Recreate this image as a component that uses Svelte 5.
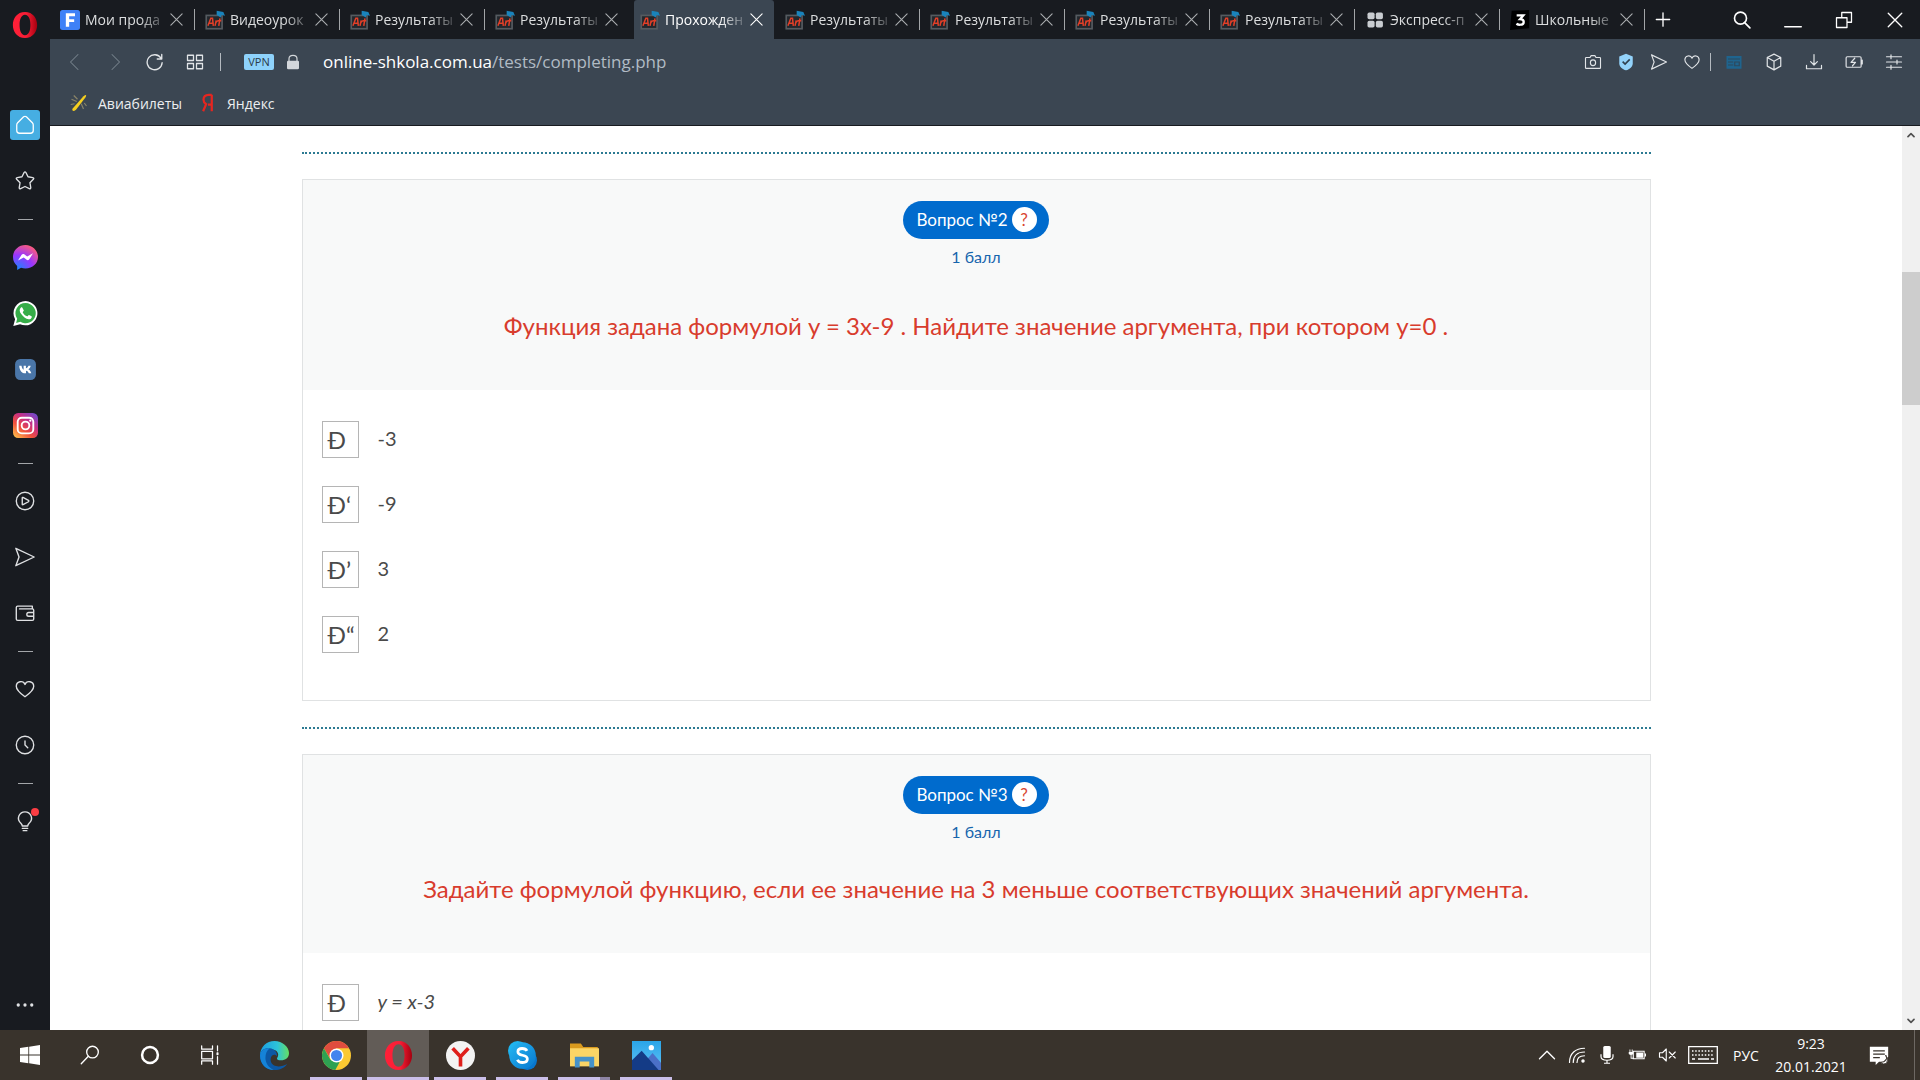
<script>
  const stroke = (body, w = 1.5, box = 24) =>
    `<svg viewBox="0 0 ${box} ${box}" width="100%" height="100%" fill="none" stroke="currentColor" stroke-width="${w}" stroke-linecap="round" stroke-linejoin="round">${body}</svg>`;
  const solid = (body, box = 24) =>
    `<svg viewBox="0 0 ${box} ${box}" width="100%" height="100%">${body}</svg>`;

  const icons = {
    opera: solid('<defs><linearGradient id="op" x1="0" x2="1"><stop offset="0" stop-color="#ff2038"/><stop offset=".55" stop-color="#fa1e36"/><stop offset="1" stop-color="#a5000f"/></linearGradient></defs><path fill="url(#op)" fill-rule="evenodd" d="M12 0C4.600 0 .8 6 .8 12s3.800 12 11.200 12 11.200-6 11.200-12S19.400 0 12 0Zm0 2.600c3.700 0 5 4.800 5 9.400s-1.300 9.400-5 9.400S7 16.600 7 12s1.300-9.400 5-9.400Z"/>'),
    home: stroke('<path d="M4 9.500 10.500 3q1.500-1 3 0L20 9.500q1 1 1 2.500v6q0 3-3 3H6q-3 0-3-3v-6q0-1.500 1-2.500Z"/>', 1.4),
    star: stroke('<path d="M11 2.800q1-1.500 2 0l2.300 4.600 5.200.9q1.700.5.600 1.900l-3.700 3.700.9 5.300q0 1.700-1.600 1.100L12 18l-4.700 2.300q-1.700.6-1.600-1.100l.9-5.300-3.700-3.700q-1.100-1.400.6-1.900l5.200-.9Z"/>'),
    messenger: solid('<defs><radialGradient id="ms" cx=".2" cy="1" r="1.100"><stop offset="0" stop-color="#1588ff"/><stop offset=".55" stop-color="#9a35ff"/><stop offset="1" stop-color="#ff5d78"/></radialGradient></defs><path fill="url(#ms)" d="M12 0C5.200 0 0 5 0 11.600c0 3.500 1.400 6.500 4 8.500v3.900l3.700-2.100c1.300.4 2.700.6 4.300.6 6.800 0 12-4.700 12-10.900S18.800 0 12 0Z"/><path fill="#fff" d="m4.800 15 3.500-5.600c.6-.9 1.700-1.100 2.500-.5l2.800 2.100 5.600-3-3.600 5.700c-.6.900-1.700 1.100-2.500.5L10.300 12Z"/>'),
    whatsapp: solid('<path fill="#fff" d="M12.200 0A11.700 11.700 0 0 0 2 17.500L.3 24l6.500-1.700A11.700 11.700 0 1 0 12.200 0Z"/><path fill="#36ad48" d="M12.200 2a9.700 9.700 0 0 0-8.200 15l-1 4 4.100-1A9.700 9.700 0 1 0 12.200 2Z"/><path fill="#fff" d="M9 6.500c-.4-.7-1-.6-1.500-.1-1.600 1.600-1.300 3.700.2 5.900 2 3 4.600 4.900 7.300 5.200 1.500.1 3-.9 3.100-2.500 0-.5-2.500-1.700-2.900-1.600-.6.200-.9 1.500-1.600 1.300-1.700-.5-3.300-1.900-4.200-3.700-.2-.6.900-1.100 1-1.800Z"/>'),
    vk: solid('<rect x="2" y="2" width="20" height="20" rx="5" fill="#4a76a8"/><path fill="#fff" d="M5 8h2.200c.2 2.200 1.300 3.600 2 3.900V8h2.200v2.600c1-.2 2-1.400 2.400-2.600H16c-.3 1.600-1.400 2.900-2.300 3.500 1 .5 2.200 1.600 2.900 3.900h-2.400c-.4-1.300-1.400-2.300-2.700-2.500v2.500h-.6C7.500 15.400 5.200 12.600 5 8Z" transform="translate(1 .3)"/>'),
    instagram: solid('<defs><linearGradient id="ig" x1=".1" y1="1" x2=".9" y2="0"><stop offset="0" stop-color="#ffc04d"/><stop offset=".35" stop-color="#f0503c"/><stop offset=".65" stop-color="#c72f86"/><stop offset="1" stop-color="#6b4bd0"/></linearGradient></defs><rect width="24" height="24" rx="5" fill="url(#ig)"/><g fill="none" stroke="#fff" stroke-width="1.800"><rect x="4.500" y="4.500" width="15" height="15" rx="4"/><circle cx="12" cy="12" r="3.700"/></g><circle cx="16.600" cy="7.400" r="1.100" fill="#fff"/>'),
    player: stroke('<circle cx="12" cy="12" r="9.500"/><path d="M9 8.500v7q0 .8.800.5l6-3.200q.8-.8 0-1.500l-6-3.200Q9 7.800 9 8.500Z"/>'),
    send: stroke('<path d="M2 2.500 22 12 2 21.500 5.500 12Z"/>'),
    wallet: stroke('<path d="M20 7.500V4.500H4q-1.500 0-1.500 1.500v12.500q0 1.500 1.500 1.500h16q1.500 0 1.500-1.500V9q0-1.500-1.500-1.500H6M21.500 11.500H16q-2 0-2 2t2 2h5.500"/>'),
    heart: stroke('<path d="M12 20.500C5 15.500 2.500 12.500 2.500 9c0-5.500 7.500-7 9.500-2 2-5 9.500-3.500 9.500 2 0 3.500-2.500 6.500-9.500 11.500Z"/>'),
    clock: stroke('<circle cx="12" cy="12" r="9.500"/><path d="M12 7.500V12l3 3"/>'),
    bulb: stroke('<path d="M9 17.500q0-1.500-1.500-3C2 9.500 6 2 12 2s10 7.500 4.500 12.500q-1.500 1.500-1.500 3ZM9 20h6M10 22.500h4"/>'),
    dots: solid('<g fill="currentColor"><circle cx="3" cy="12" r="2.200"/><circle cx="12" cy="12" r="2.200"/><circle cx="21" cy="12" r="2.200"/></g>'),
    close: stroke('<path d="M3 3 21 21M21 3 3 21"/>', 1.8),
    plus: stroke('<path d="M12 2v20M2 12h20"/>', 2),
    search: stroke('<circle cx="10" cy="9.500" r="8"/><path d="m15.500 15.500 7 7"/>', 2.2),
    minimise: stroke('<path d="M1 21h22"/>', 2),
    restore: stroke('<path d="M2 9h14v13H2ZM9 9V2h13v13h-6"/>', 1.7),
    back: stroke('<path d="M16 2 6 12l10 10"/>', 1.4),
    forward: stroke('<path d="m8 2 10 10L8 22"/>', 1.4),
    reload: stroke('<path d="M20 7A10 10 0 1 0 21.500 13M21 2v6h-6"/>', 1.8),
    speed: stroke('<path d="M2 3h8v7H2ZM14 3h8v7h-8ZM2 14h8v7H2ZM14 14h8v7h-8Z"/>', 1.7),
    lock: solid('<path fill="none" stroke="#d3d7db" stroke-width="1.800" d="M6 11V7q0-5 6-5t6 5v4"/><rect x="3" y="10" width="18" height="13" rx="2" fill="#d3d7db"/>'),
    camera: stroke('<path d="M3 6h5l1.500-2.500h5L16 6h5q1 0 1 1v12.500q0 1-1 1H3q-1 0-1-1V7q0-1 1-1Z"/><ellipse cx="12" cy="13" rx="3.500" ry="3.800"/>', 1.5),
    shield: solid('<path fill="#93d3fb" d="m12 1 9 3.500v9c0 5-4 8-9 9.500-5-1.500-9-4.500-9-9.500v-9Z"/><path d="m7.500 11.500 3.300 3.200L17 8.500" fill="none" stroke="#30414f" stroke-width="2.200"/>'),
    news: solid('<rect x="2" y="4" width="20" height="17" fill="#1f648e"/><path d="M4 8h16M4 12h7M4 16h7M13 12h6v5h-6Z" stroke="#2f485b" fill="none" stroke-width="1.500"/>'),
    cube: stroke('<path d="m12 1.500 9 4.500v11.500l-9 5-9-5V6ZM3 6l9 5 9-5M12 11v11"/>', 1.6),
    download: stroke('<path d="M12 2v14M7.500 11.500 12 16l4.500-4.500M2 16.500V21h20v-4.500"/>', 1.6),
    power: stroke('<path d="M3 5h17q1.500 0 1.500 1.500v11Q21.500 19 20 19H3q-1.500 0-1.500-1.500v-11Q1.500 5 3 5ZM23 9.500v5M13 7l-5 5.500h6L10 17"/>', 1.6),
    sliders: stroke('<path d="M2 5h20M2 12h20M2 19h20M8 2.500v5M16 9.500v5M8 16.500v5"/>', 1.6),
    frog: solid('<rect width="24" height="24" rx="3" fill="#3e81f7"/><path d="M7 4h11v3.500h-7v3.500h6v3.300h-6V20H7Z" fill="#fff"/>'),
    art: solid('<rect x="1.500" y="6.500" width="19" height="16" fill="#23272c" stroke="#555b60" stroke-width="2"/><path d="m3.500 19 3.500-9h2l1 9M5 16h5M12 19l1.500-6.500M13 15q1.500-2 3-2M16.500 19l1.500-9M15 13h4.500" fill="none" stroke="#e23f28" stroke-width="1.800"/><path d="m14 1 8 1.500L24 7l-4-1-1 3-5-3Z" fill="#1a83bb"/>'),
    express: solid('<g fill="#c9cdd1"><rect x="3" y="3" width="8.500" height="8" rx="2"/><rect x="13" y="3" width="8.500" height="8" rx="2"/><rect x="3" y="13" width="8.500" height="8" rx="2"/><rect x="13" y="13" width="8.500" height="8" rx="2"/></g>'),
    znanija: solid('<path d="M2 1 23 0v22L0 24Z" fill="#000"/><path d="M8 6.500h8l-4 4.500q4.500 0 4.500 3.300T12 17.700q-2.600 0-4.300-1.200" fill="none" stroke="#fff" stroke-width="2.700"/>'),
    plane: solid('<path d="m3 20 15-17q5-4 3 1L8 21q-5 4-5-1Z" fill="#f6cf1f"/><path d="m2 7 7 3M15 13l3 7M5 2l5 5M19 12l3 4M1 14l5-1" stroke="#8a8467" stroke-width="1.600"/>'),
    yandex: solid('<path d="M17 1h-4Q6 1 6 7.500q0 3.500 3.500 6L5.500 23M17 1v22M17 14h-5" fill="none" stroke="#e52620" stroke-width="3"/>'),
    windows: solid('<path fill="#fff" d="m0 3.500 10-1.400v9.300H0ZM11 2l13-2v11.400H11ZM0 12.500h10v9.300L0 20.500ZM11 12.500h13V24l-13-2Z"/>'),
    find: stroke('<circle cx="15" cy="8.500" r="7"/><path d="M10 13.500 1.500 22.500"/>', 1.6),
    cortana: stroke('<circle cx="12" cy="12" r="9.500"/>', 3),
    tasks: stroke('<path d="M2 1v4h13V1M2 7.500h13v9H2ZM2 23v-4h13v4M21 1v6M21 14v9M20.500 9.500h1v2h-1Z"/>', 1.5),
    edge: solid('<defs><linearGradient id="eg" x1="0" x2="1"><stop offset="0" stop-color="#1b9de2"/><stop offset=".6" stop-color="#2dc3d8"/><stop offset="1" stop-color="#65df62"/></linearGradient></defs><path fill="url(#eg)" d="M0 12C0 5 5.500 0 12 0s12 4.700 12 10c0 4-3 6-6.500 6-2.500 0-4-1-3.200-2.200C17 10 12.500 5.500 7.500 7.500 3 9.200.8 12 0 12Z"/><path fill="#0c58a5" d="M0 12c.5-5 4-6.500 8-6 4 .4 6.500 3.500 6 6.500-3-3-6 .5-5 4.500 1.500 5 8.500 5 13.500 2C20 22.500 16.500 24 12 24 5 24 0 19 0 12Z"/><path fill="#1583d8" d="M0 12c.5-4 3.500-6.500 8-6C5.500 8 4.500 10.500 4.500 14c0 4 2.500 8 7 10C5 24 0 19 0 12Z"/>'),
    chrome: solid('<circle cx="12" cy="12" r="12" fill="#fbc932"/><path fill="#df4d3f" d="M1.600 6A12 12 0 0 1 22.400 6H12L6.500 14Z"/><path fill="#2ea152" d="M1.600 6 7 15.500l7.500 2L11 24A12 12 0 0 1 1.600 6Z"/><circle cx="12" cy="12" r="5.800" fill="#fff"/><circle cx="12" cy="12" r="4.600" fill="#4484ee"/>'),
    ybrowser: solid('<circle cx="12" cy="12" r="12" fill="#f3f3f3"/><path d="m5.500 6 6.500 7 6.500-7M12 13v8" fill="none" stroke="#df1f1b" stroke-width="3"/>'),
    skype: solid('<defs><linearGradient id="sk" x2="1" y2="1"><stop stop-color="#25b8f2"/><stop offset="1" stop-color="#0877cf"/></linearGradient></defs><rect x="0" y="0" width="16" height="16" rx="8" fill="#1eb4ef"/><rect x="8" y="8" width="16" height="16" rx="8" fill="#0877cf"/><circle cx="12" cy="12" r="11" fill="url(#sk)"/><path d="M15.700 8.200q-1-2-4-2-3.500 0-3.500 2.700 0 2.200 3.800 2.900 4 .7 4 3.100 0 2.900-4 2.900-3.200 0-4.200-2.300" fill="none" stroke="#fff" stroke-width="2.300"/>'),
    explorer: solid('<path d="M0 2h9l2 3h12v5H0Z" fill="#d99a1e"/><path d="M0 6h24v15H0Z" fill="#fbd566"/><path d="M4 22V13h16v9h-4v-5H8v5Z" fill="#4692c9"/>'),
    photos: solid('<defs><linearGradient id="ph" x2="0" y2="1"><stop stop-color="#2aa5e8"/><stop offset="1" stop-color="#61c3f5"/></linearGradient></defs><path fill="url(#ph)" d="M0 0h24v24H0Z"/><circle cx="16" cy="5.500" r="2.200" fill="#fff"/><path fill="#4a70c8" d="m10 18 7-8 7 8v6H10Z"/><path fill="#143b86" d="m0 16 8-8 14 16H0Z"/>'),
    up: stroke('<path d="m2 17 10-10 10 10"/>', 1.8),
    arrow: stroke('<path d="m3 17 9-9 9 9"/>', 5),
    wifi: stroke('<path d="M2 22C2 10 10 3 22 3M7 22c0-9 6-14 15-14M12 22c0-6 4-9 10-9"/><circle cx="20" cy="20" r="1.500" fill="currentColor"/>', 1.6),
    mic: solid('<rect x="7" y="0" width="10" height="16" rx="2" fill="#fff"/><path d="M4 11v3q0 5 8 5t8-5v-3M12 19v4M8 23h8" fill="none" stroke="#fff" stroke-width="1.600"/>'),
    battery: solid('<path d="M7 7h14.500v10H7Z" fill="none" stroke="#fff" stroke-width="1.500"/><path d="M11 8.500h9v7h-9ZM22.500 10H24v4h-1.500ZM1 8h6v2.500q-3 3-6 0ZM3.500 12h1.200v5H3.500ZM2 4.500h1.200V8H2ZM5 4.500h1.200V8H5ZM4 15.500h4V17H4Z" fill="#fff"/>'),
    mute: stroke('<path d="M2 9h4l5-5v16l-5-5H2ZM15 8l8 8M23 8l-8 8"/>', 1.5),
    keyboard: '<svg viewBox="0 0 30 18" width="30" height="18"><path d="M.7.700h28.600v16.600H.7Z" fill="none" stroke="#fff" stroke-width="1.300"/><path d="M4 5h22M4 9h22" stroke="#fff" stroke-width="1.500" stroke-dasharray="1.500 1.700"/><path d="M4 13h3M10 13h11M23 13h3" stroke="#fff" stroke-width="1.500"/></svg>',
    notice: solid('<path d="M1 2h22v12l-6 6h-5l-4 4v-4H1Z" fill="#fff"/><path d="M5 7h14M5 11h14M5 15h8" stroke="#39332d" stroke-width="1.500"/><path d="M20 12q4 8-6 9 3 3 7 1 3-4-1-10Z" fill="#fff" stroke="#39332d" stroke-width="1"/>')
  };

  const tabs = [
    ['frog', 'Мои прода'], ['art', 'Видеоурок'], ['art', 'Результаты'], ['art', 'Результаты'],
    ['art', 'Прохожден', true], ['art', 'Результаты'], ['art', 'Результаты'],
    ['art', 'Результаты'], ['art', 'Результаты'], ['express', 'Экспресс-п'], ['znanija', 'Школьные']
  ];
  const side = ['home', 'star', '', 'messenger', 'whatsapp', 'vk', 'instagram', '', 'player', 'send', 'wallet', '', 'heart', 'clock', '', 'bulb'];
  const apps = [
    ['edge', ''], ['chrome', 'open'], ['opera', 'open current'], ['ybrowser', 'open'],
    ['skype', 'open'], ['explorer', 'open stacked'], ['photos', 'open']
  ];
  const questions = [
    { n: 2, roomy: true, text: 'Функция задана формулой y = 3x-9 . Найдите значение аргумента, при котором y=0 .',
      options: [['Ð', '-3'], ['Ð‘', '-9'], ['Ð’', '3'], ['Ð“', '2']] },
    { n: 3, text: 'Задайте формулой функцию, если ее значение на 3 меньше соответствующих значений аргумента.',
      formula: true, options: [['Ð', 'y = x-3']] }
  ];
</script>

<div class="desktop">
  <nav class="sidebar" aria-label="Боковая панель">
    <button class="logo" aria-label="Opera">{@html icons.opera}</button>
    {#each side as item}
      {#if item}
        <button class="side {item}" aria-label={item}>
          <span class="glyph">{@html icons[item]}</span>
          {#if item === 'bulb'}<i class="alert"></i>{/if}
        </button>
      {:else}
        <hr />
      {/if}
    {/each}
    <button class="more" aria-label="Ещё"><span>{@html icons.dots}</span></button>
  </nav>

  <div class="browser">
    <header class="tabs">
      {#each tabs as [icon, title, active], i}
        <div class="tab" class:active class:plain={active || tabs[i + 1]?.[2]}>
          <span class="fav">{@html icons[icon]}</span>
          <button class="title">{title}</button>
          <button class="close" aria-label="Закрыть вкладку">{@html icons.close}</button>
        </div>
      {/each}
      <button class="newtab" aria-label="Новая вкладка">{@html icons.plus}</button>
      <div class="window">
        <button aria-label="Поиск">{@html icons.search}</button>
        <button aria-label="Свернуть">{@html icons.minimise}</button>
        <button aria-label="Развернуть">{@html icons.restore}</button>
        <button aria-label="Закрыть">{@html icons.close}</button>
      </div>
    </header>

    <div class="toolbar">
      <div class="nav">
        <button class="off" aria-label="Назад">{@html icons.back}</button>
        <button class="off" aria-label="Вперёд">{@html icons.forward}</button>
        <button aria-label="Обновить">{@html icons.reload}</button>
        <button aria-label="Экспресс-панель">{@html icons.speed}</button>
      </div>
      <i class="bar"></i>
      <button class="vpn">VPN</button>
      <span class="lock">{@html icons.lock}</span>
      <button class="address">online-shkola.com.ua<span>/tests/completing.php</span></button>
      <div class="near">
        {#each ['camera', 'shield', 'send', 'heart'] as name}
          <button aria-label={name}>{@html icons[name]}</button>
        {/each}
      </div>
      <i class="bar"></i>
      <div class="far">
        {#each ['news', 'cube', 'download', 'power', 'sliders'] as name}
          <button aria-label={name}>{@html icons[name]}</button>
        {/each}
      </div>
    </div>

    <div class="bookmarks">
      <a href="#avia"><span>{@html icons.plane}</span>Авиабилеты</a>
      <a href="#yandex"><span>{@html icons.yandex}</span>Яндекс</a>
    </div>

    <div class="view">
      <main>
        {#each questions as q}
          <section>
            <div class="head" class:roomy={q.roomy}>
              <div class="pill">Вопрос №{q.n}<button aria-label="Справка">?</button></div>
              <p class="score">1 балл</p>
              <h2>{q.text}</h2>
            </div>
            <div class="options">
              {#each q.options as [letter, value]}
                <label>
                  <span class="box"><input type="radio" name="q{q.n}" /><span>{letter}</span></span>
                  <span class="value" class:formula={q.formula}>{value}</span>
                </label>
              {/each}
            </div>
          </section>
        {/each}
      </main>
      <div class="scroll">
        <span class="arrow">{@html icons.arrow}</span>
        <div class="track"><div class="thumb"></div></div>
        <span class="arrow down">{@html icons.arrow}</span>
      </div>
    </div>
  </div>

  <footer class="taskbar">
    <div class="system">
      {#each ['windows', 'find', 'cortana', 'tasks'] as name}
        <button aria-label={name}>{@html icons[name]}</button>
      {/each}
    </div>
    <div class="apps">
      {#each apps as [name, state]}
        <button class={state} aria-label={name}><span>{@html icons[name]}</span></button>
      {/each}
    </div>
    <div class="tray">
      {#each ['up', 'wifi', 'mic', 'battery', 'mute'] as name}
        <button class="small" aria-label={name}>{@html icons[name]}</button>
      {/each}
      <button class="keys" aria-label="Клавиатура">{@html icons.keyboard}</button>
      <button class="lang">РУС</button>
      <button class="time"><span>9:23</span><span>20.01.2021</span></button>
      <button class="notice" aria-label="Уведомления">{@html icons.notice}</button>
    </div>
    <div class="peek"></div>
  </footer>
</div>

<style>
  :global(body) { margin: 0; background: #fff; }
  .desktop, .desktop * { box-sizing: border-box; }
  .desktop {
    display: grid;
    grid-template: minmax(0, 1fr) 50px / 50px minmax(0, 1fr);
    height: 100vh;
    overflow: hidden;
    font-family: "Open Sans", "Noto Sans", sans-serif;
    color: #fff;
  }
  .desktop :global(svg) { display: block; }
  button { border: 0; padding: 0; margin: 0; background: none; color: inherit; font: inherit; }

  .sidebar { background: #181b20; display: flex; flex-direction: column; align-items: center; color: #dfe1e3; }
  .logo { width: 26px; height: 26px; margin: 12px 0 59px; }
  .side { position: relative; display: grid; place-items: center; width: 50px; height: 56px; flex: none; }
  .glyph { width: 22px; height: 22px; }
  .home .glyph { width: 30px; height: 30px; padding: 4px; background: #46aee2; border-radius: 3px; color: #fff; }
  .messenger .glyph, .whatsapp .glyph, .vk .glyph, .instagram .glyph { width: 25px; height: 25px; }
  .alert { position: absolute; right: 11px; top: 15px; width: 8px; height: 8px; border-radius: 50%; background: #fb3d43; }
  hr { width: 15px; height: 20px; margin: 0; border: 0; flex: none; background: linear-gradient(#a3a6a9, #a3a6a9) center / 100% 1px no-repeat; }
  .more { margin-top: auto; padding: 16px 0; }
  .more span { display: block; width: 18px; height: 18px; }

  .browser { display: flex; flex-direction: column; min-width: 0; min-height: 0; }
  .tabs { display: flex; height: 39px; flex: none; background: #181b20; font-size: 14px; }
  .tab { position: relative; display: flex; align-items: center; gap: 5px; flex: 0 1 145px; min-width: 0; padding: 0 11px 0 10px; color: #dcdedf; }
  .tab::after { content: ""; position: absolute; right: 0; top: 9px; height: 21px; width: 1px; background: #a2a5a8; }
  .plain::after { display: none; }
  .active { flex-basis: 140px; margin: 0 1px 0 4px; padding: 0 10px 0 6px; background: #3b4652; border-radius: 3px 3px 0 0; color: #fff; }
  .fav { width: 20px; height: 20px; flex: none; }
  .title { flex: 1; min-width: 0; height: 30px; text-align: left; white-space: nowrap; mask-image: linear-gradient(90deg, #000 70%, #0004 100%); }
  .close { width: 15px; height: 15px; flex: none; margin-left: 2px; color: #a9acaf; }
  .active .close { color: #fff; }
  .newtab { width: 16px; margin-left: 10px; flex: none; }
  .window { display: flex; align-items: center; gap: 33px; margin-left: auto; padding-right: 16px; }
  .window button { width: 18px; height: 18px; }

  .toolbar { display: flex; align-items: center; height: 46px; flex: none; padding: 0 17px 0 5px; background: #3b4652; color: #e1e4e7; }
  .nav { display: flex; }
  .nav button { width: 40px; height: 18px; }
  .nav .off { color: #75808a; }
  .bar { width: 1px; height: 18px; margin: 0 5px; background: #b4bac0; }
  .vpn { width: 30px; height: 16px; margin-left: 18px; border-radius: 2px; background: #8ed2fb; color: #2b3a47; font-size: 11px; line-height: 16px; }
  .lock { width: 16px; height: 16px; margin: 0 22px 0 11px; }
  .address { flex: 1; min-width: 0; overflow: hidden; text-align: left; font-size: 17px; line-height: 24px; color: #fff; white-space: nowrap; }
  .address span { color: #b1bbc4; }
  .near { display: flex; gap: 15px; margin-right: 4px; }
  .far { display: flex; gap: 22px; margin-left: 9px; }
  .near button, .far button { width: 18px; height: 18px; }

  .bookmarks { display: flex; align-items: center; gap: 17px; height: 41px; flex: none; padding: 0 20px 4px; background: #3b4652; border-bottom: 1px solid #181b20; }
  .bookmarks a { display: flex; align-items: center; gap: 10px; color: #eceef0; text-decoration: none; font-size: 14px; }
  .bookmarks span { width: 18px; height: 20px; }

  .view { display: flex; flex: 1; min-height: 0; background: #fff; color: #4a4a4a; overflow: hidden; font-family: Lato, "Open Sans", sans-serif; }
  main { flex: 1; min-width: 0; max-width: 1389px; margin: 26px auto 0; padding: 0 20px; }
  section { position: relative; margin-top: 53px; border: 1px solid #e0e2e3; }
  section:first-child { margin-top: 27px; }
  section::before { content: ""; position: absolute; left: -1px; right: -1px; top: -28px; border-top: 2px dotted #2c7a92; }
  .head { display: flex; flex-direction: column; align-items: center; height: 198px; padding-top: 21px; background: #f8f9f9; }
  .roomy { height: 210px; }
  .pill { display: flex; align-items: center; gap: 4px; height: 38px; padding: 0 12px 2px 13px; border-radius: 19px; background: #006bcd; color: #fff; font-size: 17px; }
  .pill button { width: 25px; height: 25px; border-radius: 50%; background: #fff; color: #d9452f; }
  .score { margin: 6px 0 0; color: #1665ad; font-size: 16px; line-height: 24px; }
  h2 { margin: 29px 0 0; color: #d83c2d; font-size: 24px; font-weight: 400; line-height: 32px; text-align: center; }
  .roomy h2 { margin-top: 41px; }
  .options { display: grid; gap: 28px; padding: 31px 19px 47px; }
  label { display: flex; align-items: center; gap: 19px; font-size: 20px; }
  .value { padding-bottom: 3px; }
  .box { display: grid; place-items: center; width: 37px; height: 37px; flex: none; font-size: 24px; line-height: 34px; }
  .box input, .box span { grid-area: 1 / 1; margin: 0; }
  .box input { appearance: none; width: 100%; height: 100%; border: 1px solid #b5b5b5; background: #fff; }
  .box span { width: 25px; white-space: nowrap; pointer-events: none; }
  .formula { font-style: italic; }
  .scroll { display: flex; flex-direction: column; width: 18px; flex: none; background: #f0f0f0; }
  .arrow { width: 18px; height: 18px; padding: 5px; color: #505050; }
  .down { transform: rotate(180deg); }
  .track { flex: 1; padding-top: 128px; }
  .thumb { height: 133px; background: #cdcdcd; }

  .taskbar { grid-column: 1 / -1; display: flex; background: #39332c; }
  .system { display: flex; align-items: center; gap: 40px; padding: 0 23px 0 20px; }
  .system button { width: 20px; height: 20px; }
  .apps { display: flex; }
  .apps button { position: relative; display: grid; place-items: center; width: 62px; }
  .apps span { width: 29px; height: 29px; }
  .apps .open::after { content: ""; position: absolute; bottom: 0; left: 5px; right: 5px; height: 3px; background: #cbbfe9; }
  .apps .current { background: #625c57; }
  .apps .current::after { left: 0; right: 0; }
  .apps .stacked::after { background: linear-gradient(90deg, #cbbfe9 80%, #8e84a4 80%); }
  .tray { display: flex; align-items: center; margin-left: auto; padding-right: 25px; }
  .small { width: 18px; height: 18px; margin-right: 12px; }
  .keys { width: 30px; margin-right: 14px; }
  .lang { width: 28px; font-size: 14px; }
  .time { display: flex; flex-direction: column; align-items: center; width: 70px; margin: 0 23px 0 16px; font-size: 14px; line-height: 23px; }
  .notice { width: 20px; height: 20px; }
  .peek { width: 6px; border-left: 1px solid #6d6863; }
</style>
